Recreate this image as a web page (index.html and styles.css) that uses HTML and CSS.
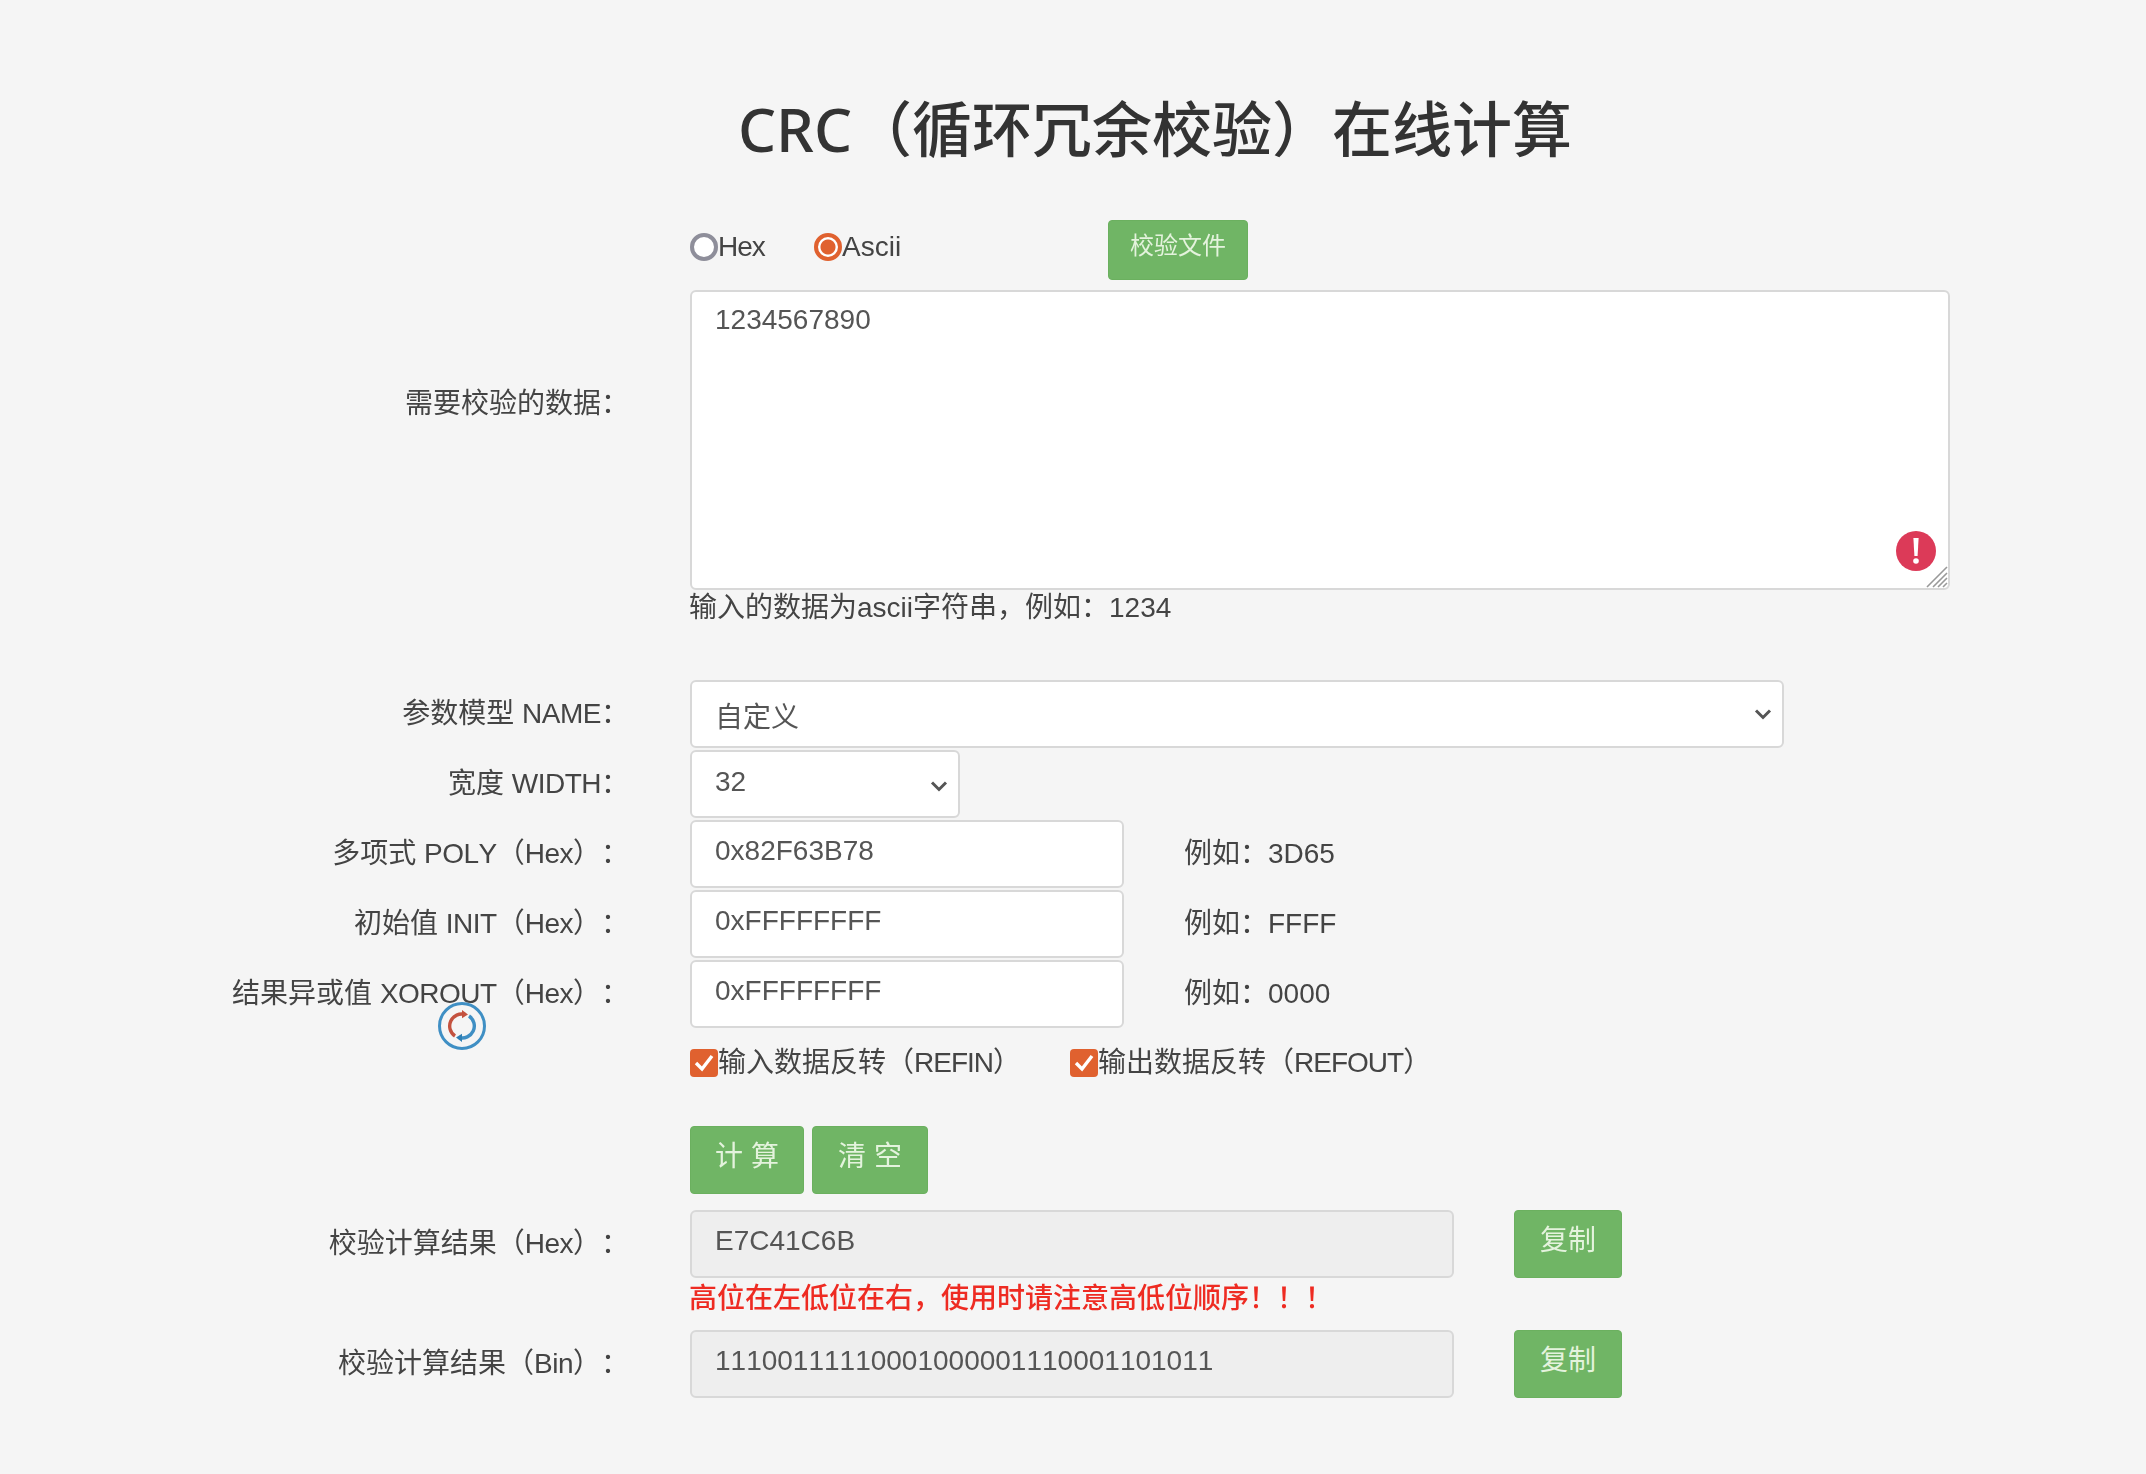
FILE: index.html
```html
<!DOCTYPE html>
<html lang="zh-CN">
<head>
<meta charset="utf-8">
<title>CRC在线计算</title>
<link rel="stylesheet" href="styles.css">
</head>
<body>
<main class="page">
  <h1 class="title">CRC（循环冗余校验）在线计算</h1>
  <form class="form">
    <div class="row row-top">
      <span class="label"></span>
      <div class="mode">
        <label class="opt opt-hex"><input type="radio" name="mode" class="radio"><span class="tight">Hex</span></label>
        <label class="opt opt-ascii"><input type="radio" name="mode" class="radio" checked>Ascii</label>
        <button type="button" class="btn btn-file">校验文件</button>
      </div>
    </div>
    <div class="row row-data">
      <label class="label label-data">需要校验的数据：</label>
      <div class="data-col">
        <div class="area-wrap">
          <textarea class="area">1234567890</textarea>
          <svg class="alert" viewBox="0 0 40 40" width="40" height="40"><circle cx="20" cy="20" r="20" fill="#dc3a58"/><path d="M17.4 7h5.2l-1 18h-3.2z" fill="#fff"/><circle cx="20" cy="30" r="2.8" fill="#fff"/></svg>
          <svg class="grip" viewBox="0 0 22 22" width="22" height="22" fill="none" stroke="#999" stroke-width="1.6"><path d="M1 21L21 1M7 21L21 7M12 21l9-9M17 21l4-4"/></svg>
        </div>
        <p class="hint">输入的数据为ascii字符串，例如：1234</p>
      </div>
    </div>
    <div class="row">
      <label class="label">参数模型 <span class="lat">NAME</span>：</label>
      <select class="ctl sel sel-name"><option>自定义</option></select>
    </div>
    <div class="row">
      <label class="label">宽度 <span class="lat">WIDTH</span>：</label>
      <select class="ctl sel sel-width"><option>32</option></select>
    </div>
    <div class="row">
      <label class="label">多项式 <span class="lat">POLY</span>（<span class="lat">Hex</span>）：</label>
      <input class="ctl inp" value="0x82F63B78">
      <span class="eg">例如：3D65</span>
    </div>
    <div class="row">
      <label class="label">初始值 <span class="lat">INIT</span>（<span class="lat">Hex</span>）：</label>
      <input class="ctl inp" value="0xFFFFFFFF">
      <span class="eg">例如：FFFF</span>
    </div>
    <div class="row">
      <label class="label">结果异或值 <span class="lat">XOROUT</span>（<span class="lat">Hex</span>）：</label>
      <input class="ctl inp" value="0xFFFFFFFF">
      <span class="eg">例如：0000</span>
    </div>
    <div class="row row-check">
      <span class="label"></span>
      <div class="checks">
        <label class="opt opt-refin"><input type="checkbox" class="check" checked><span>输入数据反转（<span class="tight">REFIN</span>）</span></label>
        <label class="opt"><input type="checkbox" class="check" checked><span>输出数据反转（<span class="tight">REFOUT</span>）</span></label>
      </div>
    </div>
    <div class="row row-actions">
      <span class="label"></span>
      <div class="actions">
        <button type="button" class="btn btn-calc">计 算</button>
        <button type="button" class="btn btn-clear">清 空</button>
      </div>
    </div>
    <div class="row">
      <label class="label">校验计算结果（<span class="lat">Hex</span>）：</label>
      <input class="ctl res" value="E7C41C6B" readonly>
      <button type="button" class="btn btn-copy">复制</button>
    </div>
    <div class="row row-warn">
      <span class="label"></span>
      <p class="warn">高位在左低位在右，使用时请注意高低位顺序！！！</p>
    </div>
    <div class="row">
      <label class="label">校验计算结果（<span class="lat">Bin</span>）：</label>
      <input class="ctl res" value="11100111110001000001110001101011" readonly>
      <button type="button" class="btn btn-copy">复制</button>
    </div>
  </form>
  <svg class="spinner" viewBox="0 0 48 48" width="48" height="48" fill="none">
    <circle cx="24" cy="24" r="22.5" stroke="#3f8fc4" stroke-width="3"/>
    <path d="M27 12.5A12 12 0 0 0 17 34" stroke="#c4523f" stroke-width="3.4"/>
    <path d="M24 8l6 4.6-6 3.6z" fill="#c4523f"/>
    <path d="M21 35.5A12 12 0 0 0 31 14" stroke="#3f8fc4" stroke-width="3.4"/>
    <path d="M24 40l-6-4.6 6-3.6z" fill="#2f7fb4"/>
  </svg>
</main>
</body>
</html>
```
FILE: styles.css
```css
* { box-sizing: border-box; }
html, body { margin: 0; background: #f5f5f5; }
body {
  font-family: "Liberation Sans", "Noto Sans CJK SC", sans-serif;
  font-size: 28px;
  line-height: 40px;
  color: #333;
  min-height: 1474px;
  text-spacing-trim: space-all;
  font-kerning: none;
}
.page { position: relative; width: 2146px; padding-top: 89px; filter: blur(0.5px); }
.title {
  margin: 0 0 51px 615px;
  width: 1080px;
  text-align: center;
  font-family: "Noto Sans", "Noto Sans CJK SC", sans-serif;
  font-size: 60px;
  line-height: 80px;
  font-weight: 500;
  font-kerning: normal;
}
.form { display: flex; flex-direction: column; }
.row { display: flex; align-items: center; min-height: 68px; margin-bottom: 2px; }
.label {
  flex: none;
  width: 690px;
  padding-right: 61px;
  text-align: right;
  white-space: nowrap;
  color: #444;
}
.lat { letter-spacing: -0.5px; }
.tight { letter-spacing: -1px; }
.row-top { min-height: 60px; margin-bottom: 10px; }
.mode { display: flex; align-items: center; height: 60px; }
.opt { display: inline-flex; align-items: center; white-space: nowrap; color: #444; }
.opt-hex { width: 124px; margin-top: -6px; }
.opt-ascii { width: 294px; margin-top: -6px; }
.radio {
  appearance: none;
  width: 28px;
  height: 28px;
  margin: 0;
  border: 4px solid #8e8e9a;
  border-radius: 50%;
  background: #fff;
  flex: none;
}
.radio:checked {
  border-color: #e0612f;
  background: radial-gradient(circle, #e0612f 0 7px, #fff 8px);
}
.check {
  appearance: none;
  width: 28px;
  height: 28px;
  margin: 0;
  border-radius: 4px;
  flex: none;
  background: #e0612f url("data:image/svg+xml,%3Csvg xmlns='http://www.w3.org/2000/svg' viewBox='0 0 28 28'%3E%3Cpath d='M6 14l6 6 10-13' fill='none' stroke='%23fff' stroke-width='3.4'/%3E%3C/svg%3E") center no-repeat;
}
.btn {
  font: inherit;
  color: #e4f3dd;
  background: #70b565;
  border: 1px solid #6bb05f;
  border-radius: 4px;
  padding: 0;
}
.btn-file { width: 140px; height: 60px; padding-bottom: 8px; font-size: 24px; }
.row-data { align-items: flex-start; margin-bottom: 0; }
.label-data { padding-top: 94px; line-height: 40px; }
.data-col { width: 1260px; }
.area-wrap { position: relative; height: 300px; }
.area, .ctl {
  font: inherit;
  color: #555;
  background: #fff;
  border: 2px solid #d8d8d8;
  border-radius: 6px;
  outline: none;
}
.area {
  display: block;
  width: 1260px;
  height: 300px;
  padding: 8px 23px;
  line-height: 40px;
  resize: none;
}
.alert { position: absolute; right: 14px; bottom: 19px; }
.grip { position: absolute; right: 2px; bottom: 2px; pointer-events: none; }
.hint { margin: 0 0 0 -1px; height: 90px; line-height: 36px; color: #444; }
.ctl { height: 68px; padding: 0 23px 6px; }
.sel {
  appearance: none;
  background: #fff url("data:image/svg+xml,%3Csvg xmlns='http://www.w3.org/2000/svg' viewBox='0 0 18 12'%3E%3Cpath d='M2 2.5l7 7 7-7' fill='none' stroke='%23555' stroke-width='3'/%3E%3C/svg%3E") no-repeat;
  background-size: 18px 12px;
}
.sel-name { width: 1094px; padding-bottom: 0; padding-top: 8px; background-position: right 10px top 26px; }
.sel-width { width: 270px; padding-bottom: 4px; background-position: right 10px top 28px; }
.inp { width: 434px; }
.eg { margin-left: 60px; color: #444; }
.row-check { min-height: 66px; margin-bottom: 30px; }
.checks { display: flex; align-items: center; }
.opt-refin { width: 380px; }
.row-actions { min-height: 68px; margin-bottom: 16px; }
.actions { display: flex; gap: 8px; }
.btn-calc, .btn-clear { height: 68px; padding-bottom: 6px; }
.btn-calc { width: 114px; }
.btn-clear { width: 116px; }
.res { width: 764px; background: #eee; color: #555; }
.btn-copy { width: 108px; height: 68px; margin-left: 60px; padding-bottom: 6px; }
.row-warn { min-height: 48px; margin-bottom: 2px; align-items: flex-start; }
.warn { margin: -1px 0 0 -1px; color: #ee2b22; font-weight: 500; }
.spinner { position: absolute; left: 438px; top: 1002px; }
```
